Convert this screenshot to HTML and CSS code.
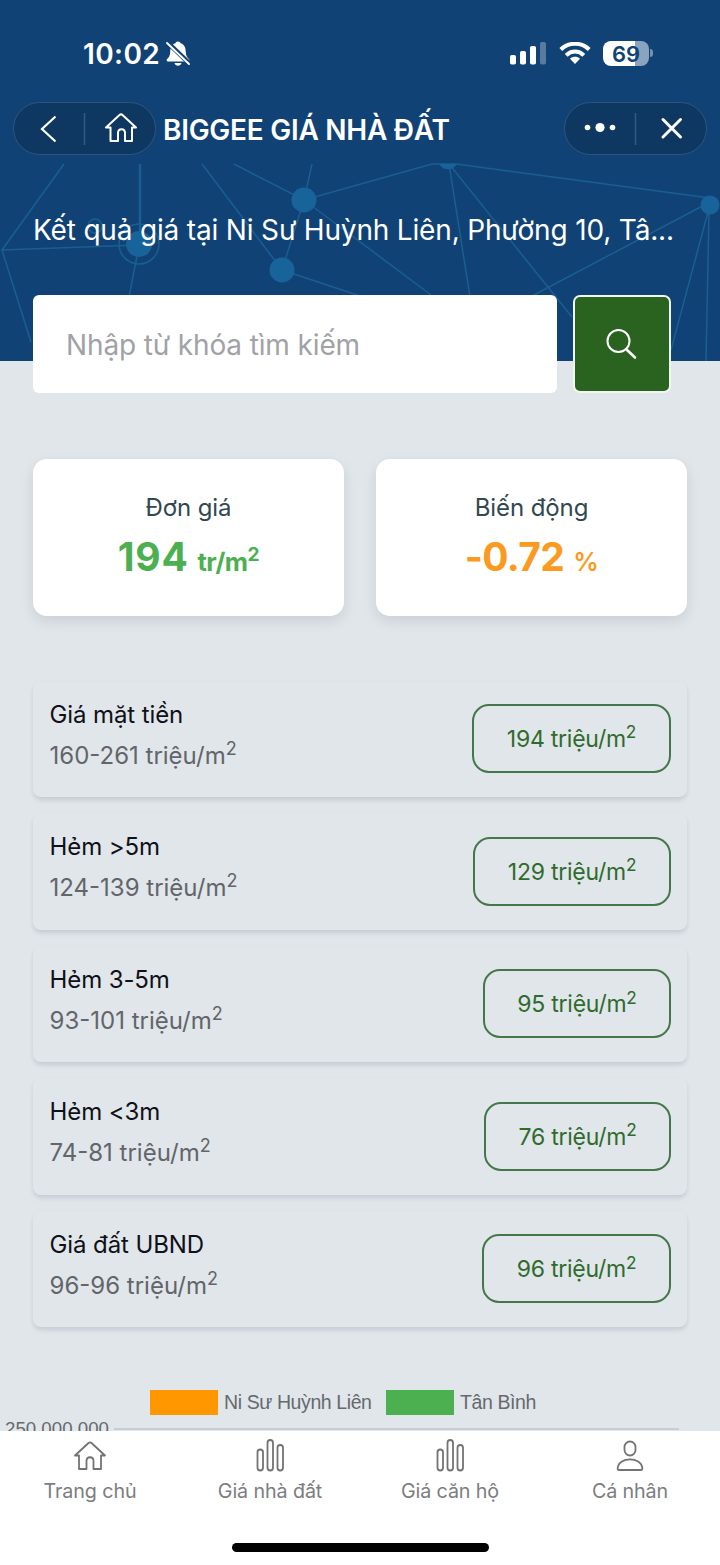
FILE: index.html
```html
<!DOCTYPE html>
<html lang="vi">
<head>
<meta charset="utf-8">
<title>BIGGEE GIÁ NHÀ ĐẤT</title>
<link rel="stylesheet" href="styles.css">
</head>
<body>
<div class="app">
  <header class="hero">
    <svg class="network" viewBox="0 0 720 361" width="720" height="361" fill="none" stroke="#195f92" stroke-width="1.5">
      <path d="M64 164 2 250l137-5M31 342 2 250M137 256l-8 41M202 164l80 106 22-70 8-36M234 164l70 36 128-36h24M304 200l127 95M282 270l90 30M449 164l21 133M449 164l123 153M456 164l254 34M710 202l-178 94M708 212l-37 138M709 212l-3 149"/>
      <path stroke-width="2.500" d="M140 164v80"/>
      <circle cx="139" cy="244" r="20"/><circle cx="95" cy="226" r="7"/>
      <g fill="#19639b" stroke="none"><circle cx="139" cy="244" r="13"/><circle cx="304" cy="200" r="12.500"/><circle cx="282" cy="270" r="12.500"/><circle cx="710" cy="205" r="9.500"/><path d="M439 164h18c-4 7-14 7-18 0z"/></g>
    </svg>
    <div class="status">
      <div class="clock">10:02
        <svg width="26" height="27" viewBox="0 0 26 27"><path fill="#fff" d="M13 1.500c-1.600 0-2.300 1-2.600 1.800C6.500 4.500 5.300 8 5.200 12c-.1 4-1.500 5.500-3.300 7.300-.8 1 0 2.200 1 2.200h20.200c1 0 1.800-1.200 1-2.200-1.800-1.800-3.200-3.300-3.300-7.300-.1-4-1.300-7.500-5.200-8.700-.3-.8-1-1.800-2.600-1.800zM9.500 23h7c-.8 3.500-6.200 3.500-7 0z"/><path stroke="#114275" stroke-width="4.600" d="M2 2l23 22"/><path stroke="#fff" stroke-width="1.900" stroke-linecap="round" d="M2 3l22 21"/></svg>
      </div>
      <div class="signals">
        <svg width="37" height="24" viewBox="0 0 37 24" fill="#fff"><rect x="0" y="13" width="6" height="9.500" rx="1.800"/><rect x="10" y="9" width="6" height="13.500" rx="1.800"/><rect x="20" y="4" width="6" height="18.500" rx="1.800"/><rect x="30" y="0" width="6" height="22.500" rx="1.800" opacity=".3"/></svg>
        <svg class="wifi" width="32" height="24" viewBox="0 0 32 24"><g fill="none" stroke="#fff" stroke-width="4"><path d="M1.800 7.500C9.500-.2 22.500-.2 30.200 7.500"/><path d="M7.200 13.300c5-5 12.600-5 17.600 0"/></g><path fill="#fff" d="M16 22l-5-5.200c2.700-2.600 7.300-2.600 10 0z"/></svg>
        <div class="battery">69</div><i class="battery-tip"></i>
      </div>
    </div>
    <nav class="topnav">
      <div class="pill">
        <svg width="141" height="52" viewBox="0 0 141 52" fill="none" stroke="#fff" stroke-width="2.200"><path d="M41.500 13.500 28 26 41.500 38.500"/><path stroke="#35597f" stroke-width="1.500" d="M70.500 10v32"/><path stroke-width="2" stroke-linejoin="round" d="M92 24.500 105.500 12q1.500-1.200 3 0L122 24.500h-4V38h-7v-8c0-5-7-5-7 0v8h-7.500V24.500z"/></svg>
      </div>
      <h1>BIGGEE GIÁ NHÀ ĐẤT</h1>
      <div class="pill pill-right">
        <svg width="141" height="52" viewBox="0 0 141 52" fill="#fff"><circle cx="22.500" cy="24.500" r="2.800"/><circle cx="35" cy="24.500" r="4.600"/><circle cx="47.500" cy="24.500" r="2.800"/><path stroke="#35597f" stroke-width="1.500" d="M70.500 10v32"/><path stroke="#fff" stroke-width="3" stroke-linecap="round" d="m98 16.500 17.500 17.500m0-17.500L98 34"/></svg>
      </div>
    </nav>
    <p class="result">Kết quả giá tại Ni Sư Huỳnh Liên, Phường 10, Tâ...</p>
    <form class="search">
      <input type="text" placeholder="Nhập từ khóa tìm kiếm">
      <button type="button" aria-label="Tìm"><svg width="32" height="32" viewBox="0 0 32 32" fill="none" stroke="#fff"><circle cx="12.500" cy="13" r="11" stroke-width="2"/><path stroke-width="2.600" stroke-linecap="round" d="m20.500 21.500 8.500 8"/></svg></button>
    </form>
  </header>
  <main>
    <section class="cards">
      <div class="card"><span>Đơn giá</span><div class="big green">194<b>tr/m<sup>2</sup></b></div></div>
      <div class="card"><span>Biến động</span><div class="big orange">-0.72<small>%</small></div></div>
    </section>
    <section class="prices">
      <div class="row"><div><h2>Giá mặt tiền</h2><p>160-261 triệu/m<sup>2</sup></p></div><div class="tag w1">194 triệu/m<sup>2</sup></div></div>
      <div class="row"><div><h2>Hẻm &gt;5m</h2><p>124-139 triệu/m<sup>2</sup></p></div><div class="tag w2">129 triệu/m<sup>2</sup></div></div>
      <div class="row"><div><h2>Hẻm 3-5m</h2><p>93-101 triệu/m<sup>2</sup></p></div><div class="tag w3">95 triệu/m<sup>2</sup></div></div>
      <div class="row"><div><h2>Hẻm &lt;3m</h2><p>74-81 triệu/m<sup>2</sup></p></div><div class="tag w4">76 triệu/m<sup>2</sup></div></div>
      <div class="row"><div><h2>Giá đất UBND</h2><p>96-96 triệu/m<sup>2</sup></p></div><div class="tag w5">96 triệu/m<sup>2</sup></div></div>
    </section>
    <section class="chart">
      <div class="legend"><i class="sw so"></i><span class="l1">Ni Sư Huỳnh Liên</span><i class="sw sg"></i><span>Tân Bình</span></div>
      <div class="axis"><span>250.000.000</span><i></i></div>
    </section>
  </main>
  <footer>
    <div class="tabs">
      <a><svg width="34" height="34" viewBox="0 0 34 34"><path d="M2 17.500 15.500 5q1.500-1.200 3 0L32 17.500h-4V31h-7.500v-8c0-5-7-5-7 0v8H6V17.500z"/></svg><span>Trang chủ</span></a>
      <a><svg width="34" height="34" viewBox="0 0 34 34"><rect x="4.500" y="11.500" width="5.500" height="21" rx="2.700"/><rect x="14.500" y="2" width="5.500" height="30.500" rx="2.700"/><rect x="24.500" y="7" width="5.500" height="25.500" rx="2.700"/></svg><span>Giá nhà đất</span></a>
      <a><svg width="34" height="34" viewBox="0 0 34 34"><rect x="4.500" y="11.500" width="5.500" height="21" rx="2.700"/><rect x="14.500" y="2" width="5.500" height="30.500" rx="2.700"/><rect x="24.500" y="7" width="5.500" height="25.500" rx="2.700"/></svg><span>Giá căn hộ</span></a>
      <a><svg width="34" height="34" viewBox="0 0 34 34"><rect x="11.500" y="3.500" width="11" height="14" rx="5.500"/><path d="M6 32c-1 0-1.500-.8-1.300-2 1.200-11.500 23.400-11.500 24.600 0 .2 1.200-.3 2-1.300 2z"/></svg><span>Cá nhân</span></a>
    </div>
    <div class="home-bar"></div>
  </footer>
</div>
</body>
</html>
```
FILE: styles.css
```css
* { box-sizing: border-box; }
body { margin: 0; font-family: Inter, "Noto Sans", sans-serif; background: #e1e6eb; }
svg { display: block; flex: none; }
h1, h2, p { margin: 0; font-weight: 400; white-space: nowrap; }
sup { font-size: 75%; line-height: 0; vertical-align: baseline; position: relative; top: -.5em; }
.app { width: 720px; height: 1565px; display: flex; flex-direction: column; overflow: hidden; }

.hero { position: relative; height: 361px; flex: none; background: #114275; color: #fff; z-index: 1; }
.network { position: absolute; left: 0; top: 0; z-index: -1; }
.status { height: 102px; padding: 5px 67px 0 83px; display: flex; align-items: center; justify-content: space-between; }
.clock { display: flex; align-items: center; gap: 5px; font-size: 28px; font-weight: 600; letter-spacing: .4px; }
.signals { display: flex; align-items: center; }
.wifi { margin: 0 12px 0 12px; }
.battery { width: 46px; height: 25px; margin-top: -1px; border-radius: 8px; background: linear-gradient(90deg, #fff 70%, #8aa3bf 70%); color: #114275; font-size: 22px; line-height: 26px; font-weight: 600; text-align: center; }
.battery-tip { width: 3px; height: 8px; margin: -1px 0 0 1px; border-radius: 0 3px 3px 0; background: #7690b0; }

.topnav { height: 53px; padding: 0 13px; display: flex; align-items: center; }
.pill { width: 143px; height: 53px; border: 1px solid #2c5682; border-radius: 27px; background: #0e3862; overflow: hidden; }
.pill-right { margin-left: auto; }
h1 { margin: 3px 0 0 7px; font-size: 28px; font-weight: 600; letter-spacing: -.27px; }
.result { padding: 55px 0 0 33px; height: 140px; font-size: 28px; line-height: 40px; letter-spacing: -.17px; }
.search { display: flex; gap: 16px; padding-left: 33px; }
.search input { width: 524px; height: 98px; border: 0; border-radius: 6px; padding: 2px 33px 0; background: #fff; font: 28px Inter, sans-serif; letter-spacing: -.13px; }
.search input::placeholder { color: #a0a2a6; opacity: 1; }
.search button { width: 98px; height: 98px; border: 2px solid #f1f6ef; border-radius: 7px; background: #29631f; display: grid; place-items: center; padding: 0; }

main { flex: none; height: 1070px; padding-top: 98px; overflow: hidden; }
.cards { display: grid; grid-template-columns: 311px 311px; gap: 32px; padding-left: 33px; }
.card { height: 157px; border-radius: 14px; background: #fff; box-shadow: 0 5px 14px rgba(0,0,0,.1); text-align: center; padding-top: 32px; color: #304850; }
.card span { display: block; font-size: 24px; line-height: 34px; letter-spacing: -.1px; }
.big { display: flex; justify-content: center; align-items: baseline; gap: 9px; font-size: 39px; line-height: 64px; font-weight: 700; white-space: nowrap; }
.big b { font-size: 25.500px; font-weight: 700; letter-spacing: -.5px; }
.big small { font-size: 25.500px; font-weight: 600; }
.green { color: #4caf50; letter-spacing: .7px; }
.orange { color: #fa9a20; letter-spacing: -.6px; }

.prices { display: flex; flex-direction: column; gap: 16px; padding: 64.500px 33px 0; }
.row { height: 116.600px; display: flex; justify-content: space-between; padding: 17px 16px 0 16.500px; border-radius: 8px; box-shadow: 0 4px 5px -1px rgba(50,50,80,.13), 0 1px 5px rgba(50,50,80,.035); }
.row h2 { font-size: 24px; line-height: 34px; color: #101117; letter-spacing: -.1px; }
.row p { font-size: 24px; line-height: 34px; margin-top: 7px; color: #626569; }
.tag { height: 69px; margin-top: 6.500px; border: 2px solid #44774a; border-radius: 17px; color: #2f6b2c; font-size: 23px; line-height: 67px; letter-spacing: -.25px; text-align: center; white-space: nowrap; }
.w1 { width: 199px; } .w2 { width: 198px; } .w3 { width: 188px; } .w4 { width: 187px; } .w5 { width: 189px; }

.chart { padding-top: 62px; font-family: "Liberation Sans", Arial, sans-serif; }
.legend { display: flex; align-items: center; padding-left: 150px; height: 27px; font-size: 19.500px; letter-spacing: -.4px; color: #66696d; white-space: nowrap; }
.sw { width: 68px; height: 25px; flex: none; margin-right: 6px; }
.so { background: #ff9800; } .sg { background: #4caf50; }
.l1 { width: 162px; }
.axis { display: flex; gap: 5px; height: 24px; padding-left: 5px; font-size: 18.700px; line-height: 26px; color: #66696d; }
.axis i { width: 565px; height: 2px; background: #c9cdd2; margin-top: 12px; }

footer { flex: 1; background: #fff; display: flex; flex-direction: column; align-items: center; }
.tabs { width: 720px; height: 112px; display: grid; grid-template-columns: repeat(4, 1fr); color: #7b7d80; font-size: 19.700px; letter-spacing: -.1px; }
.tabs a { display: flex; flex-direction: column; align-items: center; padding-top: 7px; }
.tabs svg { fill: none; stroke: #737373; stroke-width: 1.800; stroke-linejoin: round; }
.tabs span { line-height: 28px; margin-top: 5px; white-space: nowrap; }
.home-bar { width: 257px; height: 9px; border-radius: 5px; background: #000; }
```
